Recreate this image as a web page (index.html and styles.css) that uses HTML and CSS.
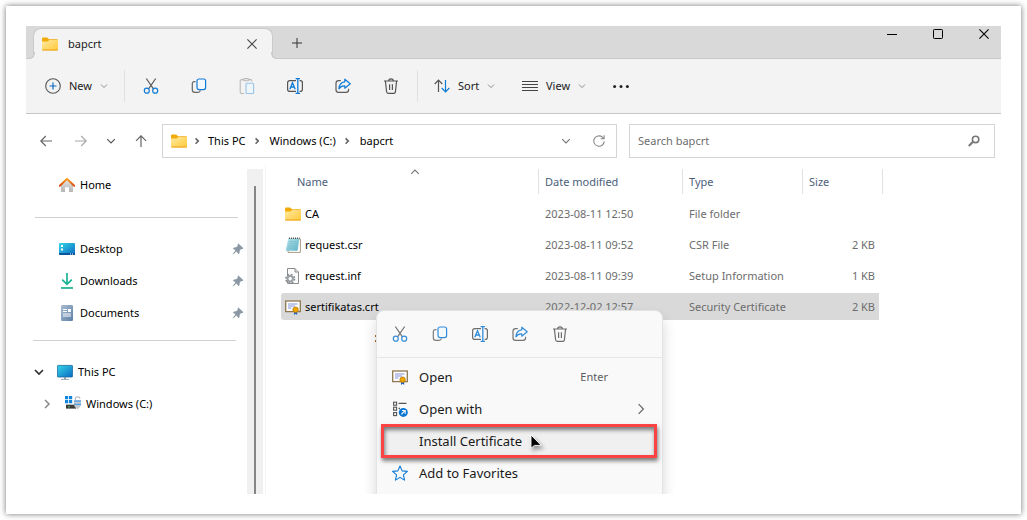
FILE: index.html
```html
<!DOCTYPE html>
<html lang="en">
<head>
<meta charset="utf-8">
<title>bapcrt</title>
<link rel="stylesheet" href="styles.css">
</head>
<body>
<svg class="defs" aria-hidden="true">
  <defs>
    <linearGradient id="gold" x1="0" y1="0" x2="1" y2="1"><stop offset="0" stop-color="#ffe9a0"/><stop offset="1" stop-color="#ffc938"/></linearGradient>
    <linearGradient id="screen" x1="0" y1="0" x2="1" y2="1"><stop offset="0" stop-color="#35d7e6"/><stop offset="1" stop-color="#0a68c4"/></linearGradient>
    <linearGradient id="roof" x1="0" y1="0" x2="0" y2="1"><stop offset="0" stop-color="#f9a01b"/><stop offset="1" stop-color="#d9480f"/></linearGradient>
    <linearGradient id="wall" x1="0" y1="0" x2="0" y2="1"><stop offset="0" stop-color="#e6e6e6"/><stop offset="1" stop-color="#b4b4b4"/></linearGradient>
    <linearGradient id="green" x1="0" y1="0" x2="0" y2="1"><stop offset="0" stop-color="#3bcf8e"/><stop offset="1" stop-color="#0c9f9a"/></linearGradient>
    <linearGradient id="slate" x1="0" y1="0" x2="1" y2="1"><stop offset="0" stop-color="#a9bdd3"/><stop offset="1" stop-color="#5d7fa6"/></linearGradient>
    <linearGradient id="pad" x1="0" y1="0" x2="1" y2="1"><stop offset="0" stop-color="#b9e6ee"/><stop offset="1" stop-color="#5fb3c6"/></linearGradient>
  </defs>
  <symbol id="folder" viewBox="0 0 16 16">
    <path d="M0 2.6Q0 1.5 1.1 1.5H5.2L7 3.2H14.9Q16 3.2 16 4.3V8H0Z" fill="#f2ab0b"/>
    <path d="M0 5.4H5.6L7.4 4H15.2Q16 4 16 4.8V13.4Q16 14.5 14.9 14.5H1.1Q0 14.5 0 13.4Z" fill="url(#gold)"/>
    <path d="M.3 14H15.7" stroke="#e9a21c" fill="none"/>
  </symbol>
  <symbol id="cut" viewBox="0 0 16 16">
    <g fill="none" stroke-width="1.2"><path d="M3.3.5 10.6 11.2M12.7.5 5.4 11.2" stroke="#5c5c5c"/><circle cx="3.8" cy="12.7" r="2.5" stroke="#0f7bd6"/><circle cx="12.2" cy="12.7" r="2.5" stroke="#0f7bd6"/></g>
  </symbol>
  <symbol id="copy" viewBox="0 0 16 16">
    <g fill="none" stroke-width="1.2"><path d="M4.5 3.6H3.4Q1.3 3.6 1.3 5.8V11.8Q1.3 14.4 3.9 14.4H7Q9 14.4 9.4 12.4" stroke="#666"/><rect x="6" y="1" width="8.6" height="10.6" rx="2" stroke="#0f7bd6" fill="#f3f8fc"/></g>
  </symbol>
  <symbol id="paste" viewBox="0 0 16 16">
    <g fill="none" stroke="#b9b9b9" stroke-width="1.1"><path d="M5 15.5H2.7Q1.2 15.5 1.2 14V3Q1.2 1.6 2.7 1.6H4.5M10 1.6H11.6Q13 1.6 13 3.4"/><rect x="4.5" y=".6" width="5.4" height="2.2" rx="1.1"/><rect x="7" y="5.2" width="7.6" height="10.3" rx="1" stroke="#97c4ea" fill="#eef5fb"/></g>
  </symbol>
  <symbol id="rename" viewBox="0 0 16 16">
    <g fill="none"><path d="M9 2.6H2.8Q.6 2.6 .6 4.8V11.2Q.6 13.4 2.8 13.4H9M12.6 2.6H13.4Q15.4 2.6 15.4 4.8V11.2Q15.4 13.4 13.4 13.4H12.6" stroke="#555" stroke-width="1.2"/><path d="M2.8 11.2 5.5 4.7 8.2 11.2M3.8 9H7.2" stroke="#0f7bd6" stroke-width="1.3"/><path d="M8.6.6H13M10.8.6V15.4M8.6 15.4H13" stroke="#0f7bd6" stroke-width="1.3"/></g>
  </symbol>
  <symbol id="share" viewBox="0 0 16 16">
    <g fill="none" stroke-width="1.2"><path d="M5.8 2.6H3.6Q1 2.6 1 5.2V11.8Q1 14.4 3.6 14.4H11Q13.6 14.4 13.6 11.8V10.8" stroke="#5c5c5c"/><path d="M9.8 1.2 15.2 5.7 9.8 10.2V7.9Q6 7.6 3.9 10.8 4.3 4.4 9.8 3.8Z" stroke="#0f7bd6" stroke-linejoin="round"/></g>
  </symbol>
  <symbol id="trash" viewBox="0 0 16 16">
    <g fill="none" stroke="#555" stroke-width="1.2"><path d="M1 3H15M5.6 3Q5.8.9 8 .9T10.4 3M2.4 3 3.6 13.8Q3.8 15.3 5.2 15.3H10.8Q12.2 15.3 12.4 13.8L13.6 3M6.6 6.3V12M9.4 6.3V12"/></g>
  </symbol>
  <symbol id="down" viewBox="0 0 10 10"><path d="M1.2 3.2 5 7 8.8 3.2" fill="none" stroke="currentColor" stroke-width="1.2"/></symbol>
  <symbol id="right" viewBox="0 0 10 10"><path d="M3 1 7 5 3 9" fill="none" stroke="currentColor" stroke-width="1"/></symbol>
  <symbol id="crumb" viewBox="0 0 10 10"><path d="M3.6 2.4 6.3 5.1 3.6 7.8" fill="none" stroke="#666" stroke-width="1.6"/></symbol>
  <symbol id="cross" viewBox="0 0 10 10"><path d="M.4.4 9.6 9.6M9.6.4.4 9.6" fill="none" stroke="currentColor" stroke-width="1.1"/></symbol>
  <symbol id="pin" viewBox="0 0 12 12"><path d="M6.4.6 11.4 5.2 10 6.2 9.1 6 7.6 7.8 7.6 10 6.6 10.9 4.4 8.5 1 11.4.6 11 3.5 7.6 1 5.4 2 4.4 4.2 4.3 5.9 2.6 5.6 1.6Z" fill="#8b98a3"/></symbol>
  <symbol id="cert" viewBox="0 0 16 16">
    <rect x=".7" y="2" width="14.6" height="10.6" fill="#fff" stroke="#8f7850" stroke-width="1.3"/>
    <path d="M3 5H12.5M3 7H10M3 9H6.5" stroke="#8492d8" fill="none"/>
    <path d="M9 12V16L10.6 14.8 12.2 16V12Z" fill="#1d5fc4"/><circle cx="10.6" cy="10.7" r="2.7" fill="#f0a800" stroke="#b67600" stroke-width=".8"/>
  </symbol>
</svg>

<div class="frame">
<div class="window">
  <header class="titlebar">
    <div class="tab">
      <svg class="i16"><use href="#folder"/></svg>
      <span class="tab-name">bapcrt</span>
      <button class="bare" aria-label="Close tab"><svg class="i10"><use href="#cross"/></svg></button>
    </div>
    <button class="bare new-tab" aria-label="New tab"><svg class="i10" viewBox="0 0 10 10"><path d="M5 0V10M0 5H10" stroke="#333" fill="none"/></svg></button>
    <div class="controls">
      <button class="bare" aria-label="Minimize"><svg class="i10" viewBox="0 0 10 10"><path d="M0 5.5H10" stroke="#000" fill="none"/></svg></button>
      <button class="bare" aria-label="Maximize"><svg class="i10" viewBox="0 0 10 10"><rect x=".5" y=".5" width="9" height="9" rx=".8" stroke="#000" fill="none"/></svg></button>
      <button class="bare" aria-label="Close"><svg class="i10"><use href="#cross"/></svg></button>
    </div>
  </header>

  <div class="toolbar">
    <button class="bare tool new"><svg class="i16" viewBox="0 0 16 16"><circle cx="8" cy="8" r="7.3" fill="none" stroke="#555" stroke-width="1.1"/><path d="M8 4.5V11.5M4.5 8H11.5" stroke="#0f6cbd" stroke-width="1.2"/></svg><span>New</span><svg class="i8"><use href="#down"/></svg></button>
    <span class="rule"></span>
    <button class="bare square" aria-label="Cut"><svg class="i16"><use href="#cut"/></svg></button>
    <button class="bare square" aria-label="Copy"><svg class="i16"><use href="#copy"/></svg></button>
    <button class="bare square" aria-label="Paste"><svg class="i16"><use href="#paste"/></svg></button>
    <button class="bare square" aria-label="Rename"><svg class="i16"><use href="#rename"/></svg></button>
    <button class="bare square" aria-label="Share"><svg class="i16"><use href="#share"/></svg></button>
    <button class="bare square" aria-label="Delete"><svg class="i16"><use href="#trash"/></svg></button>
    <span class="rule"></span>
    <button class="bare tool sort"><svg class="i16" viewBox="0 0 16 16"><path d="M4.5 14V2.4M.7 6 4.5 2.2 8.3 6" fill="none" stroke="#555" stroke-width="1.2"/><path d="M11.5 2V13.6M7.7 10 11.5 13.8 15.3 10" fill="none" stroke="#0f7bd6" stroke-width="1.2"/></svg><span>Sort</span><svg class="i8"><use href="#down"/></svg></button>
    <button class="bare tool view"><svg class="i16" viewBox="0 0 16 16"><path d="M0 3.5H16M0 6.5H16M0 9.5H16M0 12.5H16" stroke="#444" fill="none"/></svg><span>View</span><svg class="i8"><use href="#down"/></svg></button>
    <button class="bare more" aria-label="See more"><svg class="i16" viewBox="0 0 16 16"><g fill="#222"><circle cx="1.6" cy="8.6" r="1.5"/><circle cx="8" cy="8.6" r="1.5"/><circle cx="14.4" cy="8.6" r="1.5"/></g></svg></button>
  </div>

  <nav class="nav">
    <div class="moves">
      <button class="bare" aria-label="Back"><svg class="i12" viewBox="0 0 12 12"><path d="M12 6H.8M5.8 1 .8 6 5.8 11" fill="none" stroke="#666" stroke-width="1.2"/></svg></button>
      <button class="bare forward" aria-label="Forward"><svg class="i12" viewBox="0 0 12 12"><path d="M0 6H11.2M6.2 1 11.2 6 6.2 11" fill="none" stroke="#aaa" stroke-width="1.2"/></svg></button>
      <button class="bare" aria-label="Recent locations"><svg class="i10"><use href="#down"/></svg></button>
      <button class="bare" aria-label="Up"><svg class="i12" viewBox="0 0 12 12"><path d="M6 12V.8M1 5.8 6 .8 11 5.8" fill="none" stroke="#666" stroke-width="1.2"/></svg></button>
    </div>
    <div class="address">
      <svg class="i16"><use href="#folder"/></svg>
      <svg class="i10 sep"><use href="#crumb"/></svg><a href="#">This PC</a>
      <svg class="i10 sep"><use href="#crumb"/></svg><a href="#">Windows (C:)</a>
      <svg class="i10 sep"><use href="#crumb"/></svg><a href="#">bapcrt</a>
      <button class="bare history" aria-label="Previous locations"><svg class="i10"><use href="#down"/></svg></button>
      <button class="bare" aria-label="Refresh"><svg class="i12" viewBox="0 0 12 12"><path d="M11.2 6.2A5.2 5.2 0 1 1 9.4 2.1L11 3.6M11.1.2V3.7H7.6" fill="none" stroke="#888" stroke-width="1.1"/></svg></button>
    </div>
    <label class="search"><input type="text" placeholder="Search bapcrt" aria-label="Search bapcrt"><svg class="i12" viewBox="0 0 12 12"><circle cx="7.6" cy="4.4" r="3.2" fill="none" stroke="#777" stroke-width="1.6"/><path d="M5 6.8.8 11" stroke="#777" stroke-width="2"/></svg></label>
  </nav>

  <div class="body">
    <aside class="sidebar">
      <a class="place" href="#"><svg class="i16" viewBox="0 0 16 16"><path d="M2 8 8 2.5 14 8V14.3Q14 15 13.3 15H10V10.2H6V15H2.7Q2 15 2 14.3Z" fill="url(#wall)"/><path d="M.8 8.8 8 1.9 15.2 8.8" fill="none" stroke="url(#roof)" stroke-width="2" stroke-linecap="round" stroke-linejoin="round"/></svg>Home</a>
      <hr>
      <a class="place" href="#"><svg class="i16" viewBox="0 0 16 16"><rect y="2" width="16" height="12" rx="1" fill="url(#screen)"/><path d="M0 12H16V13Q16 14 15 14H1Q0 14 0 13Z" fill="#0b559c"/><path d="M2 4H4V6H2ZM2 7.5H4V9.5H2ZM11 12.5H12V13.5H11ZM13 12.5H14V13.5H13Z" fill="#fff"/></svg>Desktop<svg class="i12 pin"><use href="#pin"/></svg></a>
      <a class="place" href="#"><svg class="i16" viewBox="0 0 16 16"><path d="M8 0V10.8M3.2 6.6 8 11.4 12.8 6.6" fill="none" stroke="#19b496" stroke-width="1.7"/><path d="M2 14H14V15.8H2Z" fill="url(#green)"/></svg>Downloads<svg class="i12 pin"><use href="#pin"/></svg></a>
      <a class="place" href="#"><svg class="i16" viewBox="0 0 16 16"><rect x="2" width="12" height="16" rx="1.2" fill="url(#slate)"/><path d="M4 4.5H8M4 6.5H8M4 9H12M4 11H12" stroke="#fff" fill="none"/><rect x="9" y="4" width="3" height="3" fill="#fff"/></svg>Documents<svg class="i12 pin"><use href="#pin"/></svg></a>
      <hr class="second">
      <a class="place root" href="#"><svg class="i10 arrow" viewBox="0 0 10 10"><path d="M1 3 5 7 9 3" fill="none" stroke="#333" stroke-width="1.7"/></svg><svg class="i16" viewBox="0 0 16 16"><rect x=".4" y="1.4" width="15.2" height="11.6" rx=".8" fill="url(#screen)" stroke="#1b6b9c" stroke-width=".8"/><path d="M7 13H9V15H7Z" fill="#8e9aa5"/><path d="M4 15.4H12" stroke="#9aa6b0" fill="none"/></svg>This PC</a>
      <a class="place drive" href="#"><svg class="i10 arrow" viewBox="0 0 10 10"><path d="M3 1 7 5 3 9" fill="none" stroke="#888" stroke-width="1.5"/></svg><svg class="i16" viewBox="0 0 16 16"><path d="M0 0H3.2V3.2H0ZM4 0H7.2V3.2H4ZM0 4H3.2V7.2H0ZM4 4H7.2V7.2H4Z" fill="#0f86dc"/><path d="M1 8.2H12L13 9.5H1Z" fill="#aaa"/><rect x="1" y="9" width="10" height="3.6" fill="#3b3b3b"/><circle cx="4" cy="10.8" r=".7" fill="#4de06a"/><path d="M10.4 4V2.8Q10.4.8 12.6.8T14.8 2.8" fill="none" stroke="#b7bec6" stroke-width="1.3"/><path d="M9 4H16V9Q15.6 11.6 12.5 13.4 9.4 11.6 9 9Z" fill="#c4c9cf"/><path d="M9 5.2H16M9 8.4H16" stroke="#4d9fe6" stroke-width="1.2"/></svg>Windows (C:)</a>
    </aside>
    <div class="scroll"><div class="thumb"></div></div>

    <main class="files">
      <svg class="i10 sorted" viewBox="0 0 10 10"><path d="M1.2 6.8 5 3 8.8 6.8" fill="none" stroke="#777" stroke-width="1.1"/></svg>
      <table>
        <thead><tr><th class="c-name">Name</th><th class="c-date">Date modified</th><th class="c-type">Type</th><th class="c-size">Size</th></tr></thead>
        <tbody>
          <tr><td><div class="file"><svg class="i16"><use href="#folder"/></svg>CA</div></td><td>2023-08-11 12:50</td><td>File folder</td><td></td></tr>
          <tr><td><div class="file"><svg class="i16" viewBox="0 0 16 16"><path d="M4 2H15.4V15.4H3Z" fill="#fff" stroke="#a79c86" stroke-width="1"/><path d="M3.2 1.6H14.4L12.6 13.8H.8Z" fill="url(#pad)"/><path d="M4 4.6H13M3.6 6.8H12.8M3.2 9H12.4M2.8 11.2H12" stroke="#79bccb" stroke-width=".7"/><path d="M4 1.2H14.6" stroke="#555" stroke-width="1.6" stroke-dasharray="1 1"/></svg>request.csr</div></td><td>2023-08-11 09:52</td><td>CSR File</td><td>2 KB</td></tr>
          <tr><td><div class="file"><svg class="i16" viewBox="0 0 16 16"><path d="M2.5.5H10L13.5 4V15.5H2.5Z" fill="#fbfbfb" stroke="#8c8c8c"/><path d="M10 .5V4H13.5" fill="#ddd" stroke="#8c8c8c"/><circle cx="5.2" cy="10.8" r="4.2" fill="none" stroke="#858b90" stroke-width="1.9" stroke-dasharray="1.7 1.6"/><circle cx="5.2" cy="10.8" r="2.7" fill="#fff" stroke="#9aa0a5" stroke-width="2"/></svg>request.inf</div></td><td>2023-08-11 09:39</td><td>Setup Information</td><td>1 KB</td></tr>
          <tr class="selected"><td><div class="file"><svg class="i16"><use href="#cert"/></svg>sertifikatas.crt</div></td><td>2022-12-02 12:57</td><td>Security Certificate</td><td>2 KB</td></tr>
        </tbody>
      </table>
    </main>
  </div>

  <span class="dots" aria-hidden="true"></span>
  <div class="menu" role="menu">
    <div class="quick">
      <button class="bare" aria-label="Cut"><svg class="i16"><use href="#cut"/></svg></button>
      <button class="bare" aria-label="Copy"><svg class="i16"><use href="#copy"/></svg></button>
      <button class="bare" aria-label="Rename"><svg class="i16"><use href="#rename"/></svg></button>
      <button class="bare" aria-label="Share"><svg class="i16"><use href="#share"/></svg></button>
      <button class="bare" aria-label="Delete"><svg class="i16"><use href="#trash"/></svg></button>
    </div>
    <div class="items">
      <button class="bare item" role="menuitem"><svg class="i16"><use href="#cert"/></svg><span>Open</span><kbd>Enter</kbd></button>
      <button class="bare item" role="menuitem"><svg class="i16" viewBox="0 0 16 16"><g fill="none" stroke="#555" stroke-width="1.1"><rect x="1.6" y="1.2" width="3" height="3"/><rect x="1.6" y="6.2" width="3" height="3"/><rect x="1.6" y="11.6" width="3" height="3"/><path d="M6.6 2.4H14.5M6.6 7.4H8"/></g><circle cx="11.3" cy="11.4" r="4.5" fill="#0b76d1"/><path d="M9.4 13.3 13 9.7M10 9.5H13.2V12.7" fill="none" stroke="#fff" stroke-width="1.1"/></svg><span>Open with</span><svg class="i12 sub"><use href="#right"/></svg></button>
      <button class="bare item marked" role="menuitem"><span>Install Certificate</span></button>
      <button class="bare item" role="menuitem"><svg class="i16" viewBox="0 0 16 16"><path d="M8 1 10.1 5.9 15.4 6.4 11.4 9.9 12.6 15.1 8 12.4 3.4 15.1 4.6 9.9.6 6.4 5.9 5.9Z" fill="none" stroke="#0f7bd6" stroke-width="1.1" stroke-linejoin="round"/></svg><span>Add to Favorites</span></button>
    </div>
    <svg class="cursor" viewBox="0 0 12 18"><path d="M1 1V14.2L4.4 11.4H11.2Z" fill="#000" stroke="#fff" stroke-width=".9"/></svg>
  </div>
</div>
</div>
</body>
</html>
```
FILE: styles.css
```css
* { box-sizing: border-box; }

body {
  margin: 0;
  height: 100vh;
  padding: 6px;
  display: flex;
  background: #fff;
  color: #1a1a1a;
  font: 12px/16px "Noto Sans", "Open Sans", sans-serif;
}

.defs { position: absolute; width: 0; height: 0; }
svg { flex: none; display: block; }
.i8 { width: 8px; height: 8px; }
.i10 { width: 10px; height: 10px; }
.i12 { width: 12px; height: 12px; }
.i16 { width: 16px; height: 16px; }

.bare {
  border: 0;
  padding: 0;
  background: none;
  color: inherit;
  font: inherit;
  display: flex;
  align-items: center;
}
a { color: inherit; text-decoration: none; }

.frame {
  flex: 1;
  min-width: 0;
  padding: 20px;
  background: #fff;
  box-shadow: 0 0 6px rgba(0, 0, 0, .55);
}
.window {
  position: relative;
  height: 100%;
  display: flex;
  flex-direction: column;
  overflow: hidden;
  font-size: 11px;
}

/* Title bar */
.titlebar {
  display: flex;
  height: 33px;
  padding: 2px 12px 0 7px;
  background: #d9d9d9;
  border-bottom: 1px solid #c8c8c8;
}
.tab {
  position: relative;
  width: 240px;
  margin-bottom: -1px;
  padding: 0 15px 0 8px;
  display: flex;
  align-items: center;
  gap: 10px;
  background: #f3f3f3;
  border: 1px solid #cacaca;
  border-bottom: 0;
  border-radius: 8px 8px 0 0;
}
.tab::before, .tab::after {
  content: "";
  position: absolute;
  bottom: 0;
  width: 6px;
  height: 6px;
  border: 0 solid #cacaca;
  border-bottom-width: 1px;
}
.tab::before {
  left: -6px;
  border-right-width: 1px;
  border-bottom-right-radius: 6px;
  box-shadow: 2px 2px 0 #f3f3f3;
  clip-path: inset(0);
}
.tab::after {
  right: -6px;
  border-left-width: 1px;
  border-bottom-left-radius: 6px;
  box-shadow: -2px 2px 0 #f3f3f3;
  clip-path: inset(0);
}
.tab-name { flex: 1; }
.tab .bare { color: #444; }
.new-tab { margin-left: 19px; }
.controls {
  flex: 1;
  height: 12px;
  display: flex;
  justify-content: flex-end;
  gap: 36px;
  color: #000;
}

/* Command bar */
.toolbar {
  display: flex;
  align-items: center;
  height: 55px;
  padding-left: 19px;
  background: #f3f3f3;
  border-bottom: 1px solid #c6c6c6;
}
.tool { gap: 8px; height: 32px; }
.tool .i8 { color: #888; }
.new { width: 79px; }
.rule { width: 1px; height: 32px; background: #e0e0e0; }
.square { width: 48px; height: 32px; justify-content: center; }
.rule + .square { margin-left: 2px; }
.square + .rule { margin-left: 2px; }
.sort { margin-left: 16px; width: 88px; }
.view { width: 91px; }

/* Address row */
.nav {
  display: flex;
  align-items: center;
  padding: 10px 6px 7px 13px;
}
.moves { display: flex; gap: 17px; width: 123px; color: #555; }
.moves .forward { margin-left: 5px; }
.moves .bare { width: 13px; height: 20px; justify-content: center; }
.address, .search {
  display: flex;
  align-items: center;
  height: 34px;
  border: 1px solid #d5d5d5;
}
.address { flex: 434; padding: 0 11px 0 8px; color: #000; }
.address .sep { margin: 0 6px 0 5px; }
.address a + .sep { margin: 0 8px 0 6px; }
.history { margin: 0 22px 0 auto; color: #777; }
.search { flex: 342; margin-left: 12px; padding: 0 14px 0 8px; }
.search input {
  flex: 1;
  min-width: 0;
  border: 0;
  padding: 0;
  outline: 0;
  background: none;
  font: inherit;
}
.search input::placeholder { color: #6d6d6d; opacity: 1; }

/* Navigation pane */
.body { flex: 1; min-height: 0; display: flex; }
.sidebar { width: 221px; padding-top: 4px; color: #000; }
.place {
  display: flex;
  align-items: center;
  gap: 5px;
  height: 32px;
  padding: 0 3px 0 33px;
}
.pin { margin-left: auto; }
.root { padding-left: 8px; }
.drive { padding-left: 16px; }
.arrow { margin-right: 8px; }
hr { height: 1px; margin: 16px 9px 15px; border: 0; background: #d0d0d0; }
hr.second { margin: 11px 11px 15px 7px; }
.scroll { width: 16px; margin-top: 4px; padding: 17px 7px 0; background: #f0f0f0; display: flex; }
.thumb { width: 2px; background: #858585; }

/* File list */
.files {
  position: relative;
  flex: 1;
  min-width: 0;
  margin-left: 2px;
  padding-left: 15px;
  border-left: 1px solid #f4f4f4;
}
.sorted { position: absolute; left: 144px; top: 2px; }
table { table-layout: fixed; width: 602px; border-collapse: separate; border-spacing: 0 4px; color: #6d6d6d; }
th, td { height: 27px; padding: 0 0 0 6px; text-align: left; font-weight: 400; white-space: nowrap; }
th {
  padding-bottom: 2px;
  color: #4c607a;
  background: linear-gradient(#e2e2e2, #e2e2e2) right top / 1px 25px no-repeat;
}
.c-name { width: 258px; padding-left: 16px; }
.c-date { width: 144px; }
.c-type { width: 120px; }
td:first-child { padding-left: 4px; color: #000; }
td:last-child { padding-right: 4px; border-right: 4px solid transparent; background-clip: padding-box; text-align: right; }
.file { display: flex; align-items: center; gap: 4px; }
.selected td { background-color: #d9d9d9; }
.selected td:first-child { border-radius: 3px 0 0 3px; }
.selected td:last-child { border-radius: 0 3px 3px 0; }

/* Context menu */
.dots {
  position: absolute;
  left: 349px;
  top: 309px;
  width: 1px;
  height: 7px;
  border: 1px solid #a06a30;
  border-width: 2px 0;
}
.menu {
  position: absolute;
  left: 350px;
  top: 284px;
  width: 287px;
  background: #f9f9f9;
  border: 1px solid #e3e3e3;
  border-radius: 8px;
  box-shadow: 0 8px 14px rgba(0, 0, 0, .16);
  font-size: 13px;
}
.quick {
  display: flex;
  gap: 24px;
  height: 47px;
  padding: 0 15px;
  border-bottom: 1px solid #e3e3e3;
  opacity: .85;
}
.items { padding: 3px 5px 16px; }
.item {
  position: relative;
  width: 100%;
  height: 32px;
  padding: 0 10px;
  gap: 11px;
}
.item kbd { margin: 0 39px 0 auto; font: inherit; font-size: 11px; color: #5c5c5c; }
.item .sub { margin-left: auto; color: #666; }
.marked { padding-left: 37px; background: #f0f0f0; }
.marked::after {
  content: "";
  position: absolute;
  inset: -1px 0 -1px -1px;
  border: 3px solid #fa4343;
  box-shadow: 1px 3px 4px rgba(0, 0, 0, .5), inset 1px 3px 4px rgba(0, 0, 0, .5);
}
.cursor {
  position: absolute;
  left: 153px;
  top: 123px;
  width: 12px;
  height: 18px;
  filter: drop-shadow(2px 3px 2px rgba(0, 0, 0, .4));
}
```
